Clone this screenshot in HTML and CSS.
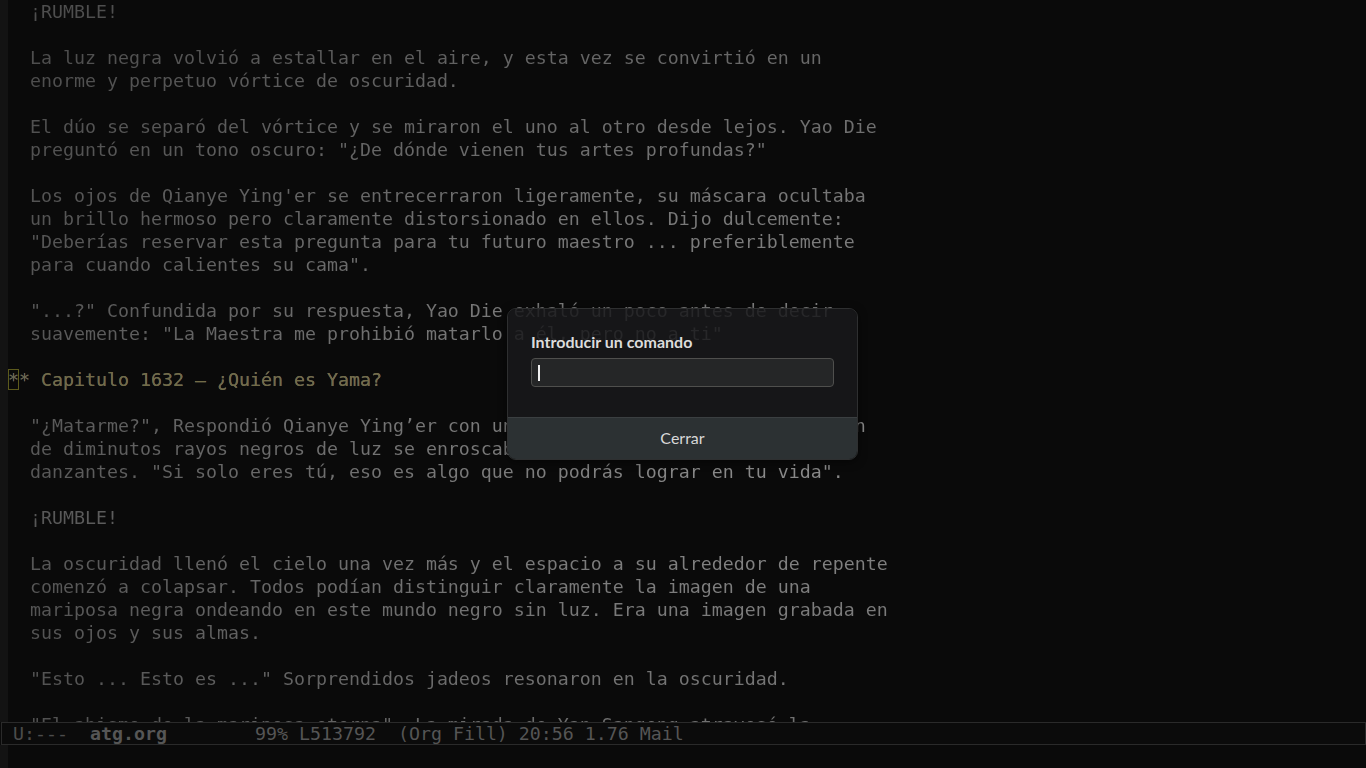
FILE: index.html
```html
<!DOCTYPE html>
<html lang="es">
<head>
<meta charset="utf-8">
<title>atg.org</title>
<link rel="stylesheet" href="styles.css">
</head>
<body>
<div class="frame">
  <div class="window">
    <div class="fringe"></div>
    <pre class="buffer">  ¡RUMBLE!

  La luz negra volvió a estallar en el aire, y esta vez se convirtió en un
  enorme y perpetuo vórtice de oscuridad.

  El dúo se separó del vórtice y se miraron el uno al otro desde lejos. Yao Die
  preguntó en un tono oscuro: "¿De dónde vienen tus artes profundas?"

  Los ojos de Qianye Ying'er se entrecerraron ligeramente, su máscara ocultaba
  un brillo hermoso pero claramente distorsionado en ellos. Dijo dulcemente:
  "Deberías reservar esta pregunta para tu futuro maestro ... preferiblemente
  para cuando calientes su cama".

  "...?" Confundida por su respuesta, Yao Die exhaló un poco antes de decir
  suavemente: "La Maestra me prohibió matarlo a él, pero no a ti"

<span class="heading"><span class="cursor">*</span><span class="star">*</span> Capitulo 1632 — ¿Quién es Yama?</span>

  "¿Matarme?", Respondió Qianye Ying’er con una risa suave, mientras un montón
  de diminutos rayos negros de luz se enroscaban alrededor de sus dedos
  danzantes. "Si solo eres tú, eso es algo que no podrás lograr en tu vida".

  ¡RUMBLE!

  La oscuridad llenó el cielo una vez más y el espacio a su alrededor de repente
  comenzó a colapsar. Todos podían distinguir claramente la imagen de una
  mariposa negra ondeando en este mundo negro sin luz. Era una imagen grabada en
  sus ojos y sus almas.

  "Esto ... Esto es ..." Sorprendidos jadeos resonaron en la oscuridad.

  "El abismo de la mariposa eterna". La mirada de Yan Sangeng atravesó la
  oscuridad.</pre>
  </div>
  <div class="modeline"><span class="ml-state">U:---</span>  <span class="ml-buf">atg.org</span>        99% L513792  (Org Fill) 20:56 1.76 Mail</div>
  <div class="echo">
    <div class="fringe"></div>
  </div>
</div>

<div class="dialog">
  <div class="dialog-body">
    <div class="dialog-title">Introducir un comando</div>
    <div class="entry"><span class="caret"></span></div>
  </div>
  <div class="dialog-footer">Cerrar</div>
</div>
</body>
</html>
```

FILE: styles.css
```css
html, body {
  margin: 0;
  padding: 0;
  background: #0a0a0a;
  width: 1366px;
  height: 768px;
  overflow: hidden;
}

.frame {
  display: flex;
  flex-direction: column;
  width: 1366px;
  height: 768px;
}

.window {
  display: flex;
  height: 722px;
  overflow: hidden;
}

.fringe {
  width: 8px;
  flex: 0 0 8px;
  background: #131313;
}

.buffer {
  margin: 0;
  flex: 1;
  font-family: "DejaVu Sans Mono", monospace;
  font-size: 18.27px;
  line-height: 23px;
  white-space: pre;
  color: transparent;
  background: radial-gradient(ellipse 900px 620px at 770px 430px, #8e8e8e 0%, #727272 45%, #565656 85%, #4e4e4e 100%);
  -webkit-background-clip: text;
  background-clip: text;
}

.heading {
  color: #726c47;
}

.cursor {
  color: #67664f;
  outline: 1px solid #5c5a1c;
  outline-offset: -1px;
}

.star {
  color: #6a674e;
}

.modeline {
  box-sizing: border-box;
  height: 23px;
  margin-left: 1px;
  border: 1px solid #2a2a2a;
  padding-left: 11px;
  font-family: "DejaVu Sans Mono", monospace;
  font-size: 18.27px;
  line-height: 21px;
  white-space: pre;
  color: #555555;
  background: #0b0b0b;
}

.ml-state {
  color: #4c4c4c;
}

.ml-buf {
  font-weight: bold;
  color: #565656;
}

.echo {
  display: flex;
  flex: 1;
}

.dialog {
  position: absolute;
  left: 507px;
  top: 308px;
  width: 351px;
  height: 152px;
  box-sizing: border-box;
  border: 1px solid #2e2f30;
  border-radius: 9px;
  overflow: hidden;
  display: flex;
  flex-direction: column;
  font-family: Lato, "Noto Sans", sans-serif;
  box-shadow: 0 2px 8px rgba(0, 0, 0, 0.5);
}

.dialog-body {
  flex: 1;
  display: flex;
  flex-direction: column;
  gap: 6px;
  padding: 23px 23px 0 23px;
  background: rgba(24, 25, 27, 0.86);
}

.dialog-title {
  font-size: 16px;
  font-weight: 700;
  line-height: 20px;
  color: #dcdcdc;
}

.entry {
  box-sizing: border-box;
  height: 29px;
  border: 1px solid #4f4f4d;
  border-radius: 4px;
  background: #252627;
  display: flex;
  align-items: center;
  padding-left: 6px;
}

.caret {
  width: 2px;
  height: 16px;
  background: #f0f0f0;
}

.dialog-footer {
  height: 42px;
  flex: 0 0 42px;
  box-sizing: border-box;
  border-top: 1px solid #3b3f41;
  background: #2c3133;
  color: #d8d8d8;
  font-size: 16px;
  display: flex;
  align-items: center;
  justify-content: center;
  padding-bottom: 2px;
}
```
